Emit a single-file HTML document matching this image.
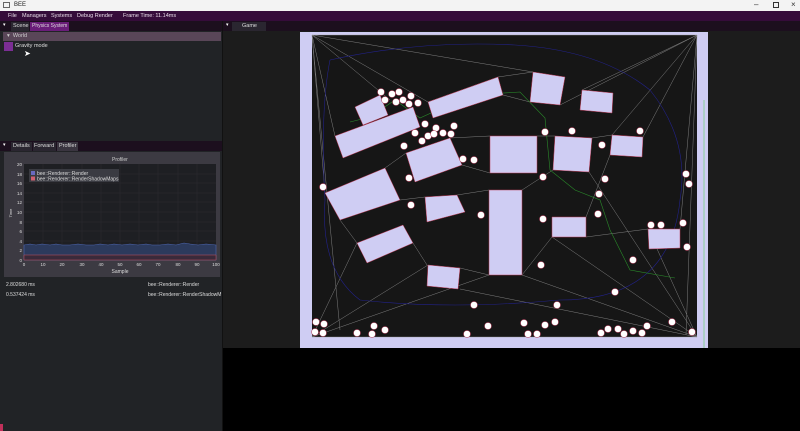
<!DOCTYPE html>
<html><head><meta charset="utf-8"><style>
*{margin:0;padding:0;box-sizing:border-box}
body{width:800px;height:431px;overflow:hidden;background:#000;font-family:"Liberation Sans",sans-serif;font-size:6px;color:#ddd;position:relative}
.a{position:absolute;white-space:nowrap}
</style></head><body>
<div class="a" style="left:0;top:0;width:800px;height:11px;background:#f3f3f3;color:#222">
 <div class="a" style="left:3px;top:2px;width:7px;height:6px;border:1px solid #666"></div>
 <div class="a" style="left:14px;top:2px;font-size:6px">BEE</div>
 <div class="a" style="left:754px;top:0;font-size:8px;color:#333">–</div>
 <div class="a" style="left:773px;top:2px;width:6px;height:6px;border:1px solid #333"></div>
 <div class="a" style="left:791px;top:0;font-size:8px;color:#333">×</div>
</div>
<div class="a" style="left:0;top:11px;width:800px;height:10px;background:#350c3a;color:#e8dce8;font-size:5.5px;line-height:10px">
 <span class="a" style="left:8px">File</span><span class="a" style="left:22px">Managers</span><span class="a" style="left:51px">Systems</span><span class="a" style="left:77px">Debug Render</span><span class="a" style="left:123px">Frame Time: 11.14ms</span>
</div>
<div class="a" style="left:0;top:21px;width:800px;height:10px;background:#1c0f1e"></div>
<div class="a" style="left:0;top:31px;width:222px;height:400px;background:#212326"></div>
<div class="a" style="left:222px;top:21px;width:1px;height:410px;background:#111"></div>
<div class="a" style="left:3px;top:22px;font-size:5px;color:#fff">▾</div>
<div class="a" style="left:11px;top:22px;width:18px;height:9px;background:#2a2630;font-size:5.5px;line-height:9px;padding-left:2px">Scene</div>
<div class="a" style="left:30px;top:22px;width:39px;height:9px;background:#6a1d79;font-size:5px;line-height:9px;padding-left:2px">Physics System</div>
<div class="a" style="left:3px;top:32px;width:218px;height:9px;background:#594658;font-size:5.5px;line-height:9px;padding-left:4px;color:#ccc">▾ &nbsp;World</div>
<div class="a" style="left:4px;top:42px;width:9px;height:9px;background:#7b2e94"></div>
<div class="a" style="left:15px;top:43px;font-size:5.5px">Gravity mode</div>
<div class="a" style="left:24px;top:49px;font-size:8px;color:#fff">➤</div>
<div class="a" style="left:0;top:141px;width:222px;height:10px;background:#1c0f1e"></div>
<div class="a" style="left:3px;top:142px;font-size:5px;color:#fff">▾</div>
<div class="a" style="left:11px;top:142px;width:21px;height:9px;background:#2a2630;font-size:5.5px;line-height:9px;padding-left:2px">Details</div>
<div class="a" style="left:33px;top:142px;width:23px;height:9px;background:#2a2630;font-size:5.5px;line-height:9px;padding-left:1px">Forward</div>
<div class="a" style="left:57px;top:142px;width:21px;height:9px;background:#3a3540;font-size:5.5px;line-height:9px;padding-left:2px">Profiler</div>
<div class="a" style="left:4px;top:152px;width:216px;height:125px;background:#3c3a42"></div>
<svg class="a" style="left:0;top:0" width="222" height="300">
 <rect x="24" y="164" width="192" height="96" fill="#1e1f23"/>
 <g stroke="#2c2d33" stroke-width="0.5">
  <line x1="24" y1="174" x2="216" y2="174"/><line x1="24" y1="183" x2="216" y2="183"/><line x1="24" y1="193" x2="216" y2="193"/><line x1="24" y1="202" x2="216" y2="202"/><line x1="24" y1="212" x2="216" y2="212"/><line x1="24" y1="222" x2="216" y2="222"/><line x1="24" y1="231" x2="216" y2="231"/><line x1="24" y1="241" x2="216" y2="241"/><line x1="24" y1="250" x2="216" y2="250"/>
  <line x1="43" y1="164" x2="43" y2="260"/><line x1="62" y1="164" x2="62" y2="260"/><line x1="82" y1="164" x2="82" y2="260"/><line x1="101" y1="164" x2="101" y2="260"/><line x1="120" y1="164" x2="120" y2="260"/><line x1="139" y1="164" x2="139" y2="260"/><line x1="158" y1="164" x2="158" y2="260"/><line x1="178" y1="164" x2="178" y2="260"/><line x1="197" y1="164" x2="197" y2="260"/>
 </g>
 <path d="M24 245 L30 244 L36 245 L42 244 L50 245 L56 244 L62 245 L70 245 L78 244 L86 245 L94 245 L100 244 L108 245 L114 244 L122 245 L130 244 L138 245 L146 244 L152 245 L160 245 L168 244 L176 245 L184 243 L190 244 L198 245 L206 244 L216 245 L216 260 L24 260Z" fill="#2c3a5c" stroke="#4d66b0" stroke-width="0.6"/>
 <path d="M24 255 L216 255 L216 260 L24 260Z" fill="#3a2a3a" stroke="#c05060" stroke-width="0.5"/>
 <rect x="29" y="169" width="90" height="13" fill="#3a3b42"/>
 <rect x="31" y="171" width="4" height="4" fill="#6a6ac0"/><rect x="31" y="176.5" width="4" height="4" fill="#d06070"/>
 <g font-size="5" fill="#ddd" font-family="Liberation Sans">
  <text x="37" y="175">bee::Renderer::Render</text><text x="37" y="180.5">bee::Renderer::RenderShadowMaps</text>
  <text x="112" y="161" fill="#ccc">Profiler</text>
  <g text-anchor="end" font-size="4.5"><text x="22" y="166">20</text><text x="22" y="176">18</text><text x="22" y="185">16</text><text x="22" y="195">14</text><text x="22" y="204">12</text><text x="22" y="214">10</text><text x="22" y="224">8</text><text x="22" y="233">6</text><text x="22" y="243">4</text><text x="22" y="252">2</text><text x="22" y="262">0</text></g>
  <g text-anchor="middle" font-size="4.5"><text x="24" y="266">0</text><text x="43" y="266">10</text><text x="62" y="266">20</text><text x="82" y="266">30</text><text x="101" y="266">40</text><text x="120" y="266">50</text><text x="139" y="266">60</text><text x="158" y="266">70</text><text x="178" y="266">80</text><text x="197" y="266">90</text><text x="216" y="266">100</text></g>
  <text x="120" y="273" text-anchor="middle">Sample</text>
  <text x="12" y="213" font-size="4" transform="rotate(-90 12 213)" text-anchor="middle">Time</text>
  <text x="6" y="286">2.802680 ms</text><text x="148" y="286">bee::Renderer::Render</text>
  <text x="6" y="296">0.537424 ms</text><text x="148" y="296">bee::Renderer::RenderShadowM</text>
 </g>
</svg>
<div class="a" style="left:0;top:424px;width:3px;height:7px;background:#c0305a"></div>
<div class="a" style="left:223px;top:31px;width:577px;height:317px;background:#1c1c1c"></div>
<div class="a" style="left:226px;top:22px;font-size:5px;color:#fff">▾</div>
<div class="a" style="left:232px;top:22px;width:34px;height:9px;background:#2a2630;font-size:5.5px;line-height:9px;padding-left:10px">Game</div>
<svg class="a" style="left:0;top:0" width="800" height="431">
 <rect x="300" y="32" width="408" height="316" fill="#cfcdf3"/>
 <rect x="312" y="35" width="385" height="302" fill="#161616"/>
 <g stroke="#9a9a9a" stroke-width="0.5" fill="none" opacity=".8">
  <path d="M312 35 L697 35 M312 35 L390 100 M312 35 L335 136 M312 35 L325 193 M312 35 L340 330 M312 35 L428 102 M312 35 L533 72 M697 35 L582 90 M697 35 L612 135 M697 35 L680 229 M697 35 L686 335 M697 35 L560 105 M697 35 L643 137"/>
  <path d="M312 337 L357 243 M312 337 L428 265 M312 337 L489 275 M697 337 L552 237 M697 337 L648 229 M697 337 L589 172 M697 337 L522 275 M697 337 L460 289 M312 337 L697 337"/>
  <path d="M428 102 L498 77 L533 72 M503 95 L530 102 M537 136 L555 136 M592 138 L612 135 M457 195 L489 190 M522 190 L553 170 M522 275 L552 237 M460 268 L489 275 M413 243 L427 265 M400 200 L425 197 M450 138 L490 136 M462 165 L490 173 M586 237 L648 229 M586 217 L610 155 M340 220 L357 243 M385 168 L406 153"/>
 </g>
 <g stroke="#22228a" stroke-width="0.6" fill="none">
  <path d="M330 60 Q420 40 515 45 Q600 50 650 90 Q690 140 680 200 Q670 300 560 300 Q450 310 360 300 Q320 270 325 200 Q320 110 330 60"/>
 </g>
 <path d="M350 122 L370 117 L395 100 L420 118 L470 95 L520 92 L545 118 L550 170 L575 190 L600 200 L610 230 L630 270 L675 278" stroke="#2a8a2a" stroke-width="0.6" fill="none"/>
 <g fill="#cfcdf3" stroke="#c0405a" stroke-width="0.5">
  <polygon points="335,136 413,107 420,127 343,158"/>
  <polygon points="355,107 380,95 388,115 363,125"/>
  <polygon points="428,102 498,77 503,95 433,118"/>
  <polygon points="533,72 565,77 560,105 530,102"/>
  <polygon points="582,90 613,93 612,113 580,110"/>
  <polygon points="406,153 450,138 462,165 415,182"/>
  <polygon points="325,193 385,168 400,200 340,220"/>
  <polygon points="490,136 537,136 537,173 490,173"/>
  <polygon points="555,136 592,138 589,172 553,170"/>
  <polygon points="612,135 643,137 642,157 610,155"/>
  <polygon points="357,243 403,225 413,243 367,263"/>
  <polygon points="425,197 457,195 465,212 427,222"/>
  <polygon points="489,190 522,190 522,275 489,275"/>
  <polygon points="552,217 586,217 586,237 552,237"/>
  <polygon points="648,229 680,229 680,248 649,249"/>
  <polygon points="428,265 460,268 458,289 427,286"/>
 </g>
 <g fill="#fff" stroke="#b03050" stroke-width="0.5">
  <circle cx="381" cy="92" r="3.5"/><circle cx="392" cy="94" r="3.5"/><circle cx="399" cy="92" r="3.5"/><circle cx="411" cy="96" r="3.5"/><circle cx="385" cy="100" r="3.5"/><circle cx="396" cy="102" r="3.5"/><circle cx="403" cy="100" r="3.5"/><circle cx="409" cy="104" r="3.5"/><circle cx="418" cy="103" r="3.5"/>
  <circle cx="425" cy="124" r="3.5"/><circle cx="436" cy="128" r="3.5"/><circle cx="454" cy="126" r="3.5"/><circle cx="415" cy="133" r="3.5"/><circle cx="428" cy="136" r="3.5"/><circle cx="434" cy="134" r="3.5"/><circle cx="443" cy="133" r="3.5"/><circle cx="451" cy="134" r="3.5"/><circle cx="422" cy="141" r="3.5"/><circle cx="404" cy="146" r="3.5"/>
  <circle cx="463" cy="159" r="3.5"/><circle cx="474" cy="160" r="3.5"/><circle cx="409" cy="178" r="3.5"/><circle cx="411" cy="205" r="3.5"/><circle cx="323" cy="187" r="3.5"/><circle cx="481" cy="215" r="3.5"/>
  <circle cx="545" cy="132" r="3.5"/><circle cx="572" cy="131" r="3.5"/><circle cx="640" cy="131" r="3.5"/><circle cx="602" cy="145" r="3.5"/><circle cx="543" cy="177" r="3.5"/><circle cx="605" cy="179" r="3.5"/><circle cx="599" cy="194" r="3.5"/><circle cx="598" cy="214" r="3.5"/><circle cx="543" cy="219" r="3.5"/>
  <circle cx="686" cy="174" r="3.5"/><circle cx="689" cy="184" r="3.5"/><circle cx="651" cy="225" r="3.5"/><circle cx="661" cy="225" r="3.5"/><circle cx="683" cy="223" r="3.5"/><circle cx="687" cy="247" r="3.5"/><circle cx="633" cy="260" r="3.5"/><circle cx="541" cy="265" r="3.5"/>
  <circle cx="474" cy="305" r="3.5"/><circle cx="557" cy="305" r="3.5"/><circle cx="615" cy="292" r="3.5"/>
  <circle cx="316" cy="322" r="3.5"/><circle cx="324" cy="324" r="3.5"/><circle cx="315" cy="332" r="3.5"/><circle cx="323" cy="333" r="3.5"/><circle cx="357" cy="333" r="3.5"/><circle cx="374" cy="326" r="3.5"/><circle cx="372" cy="334" r="3.5"/><circle cx="385" cy="330" r="3.5"/><circle cx="467" cy="334" r="3.5"/><circle cx="488" cy="326" r="3.5"/>
  <circle cx="524" cy="323" r="3.5"/><circle cx="528" cy="334" r="3.5"/><circle cx="537" cy="334" r="3.5"/><circle cx="545" cy="325" r="3.5"/><circle cx="555" cy="322" r="3.5"/><circle cx="601" cy="333" r="3.5"/><circle cx="608" cy="329" r="3.5"/><circle cx="618" cy="329" r="3.5"/><circle cx="624" cy="334" r="3.5"/><circle cx="633" cy="331" r="3.5"/><circle cx="642" cy="333" r="3.5"/><circle cx="647" cy="326" r="3.5"/><circle cx="672" cy="322" r="3.5"/><circle cx="692" cy="332" r="3.5"/>
 </g>
 <line x1="704" y1="100" x2="704" y2="348" stroke="#40d040" stroke-width="0.5"/>
</svg>
</body></html>
